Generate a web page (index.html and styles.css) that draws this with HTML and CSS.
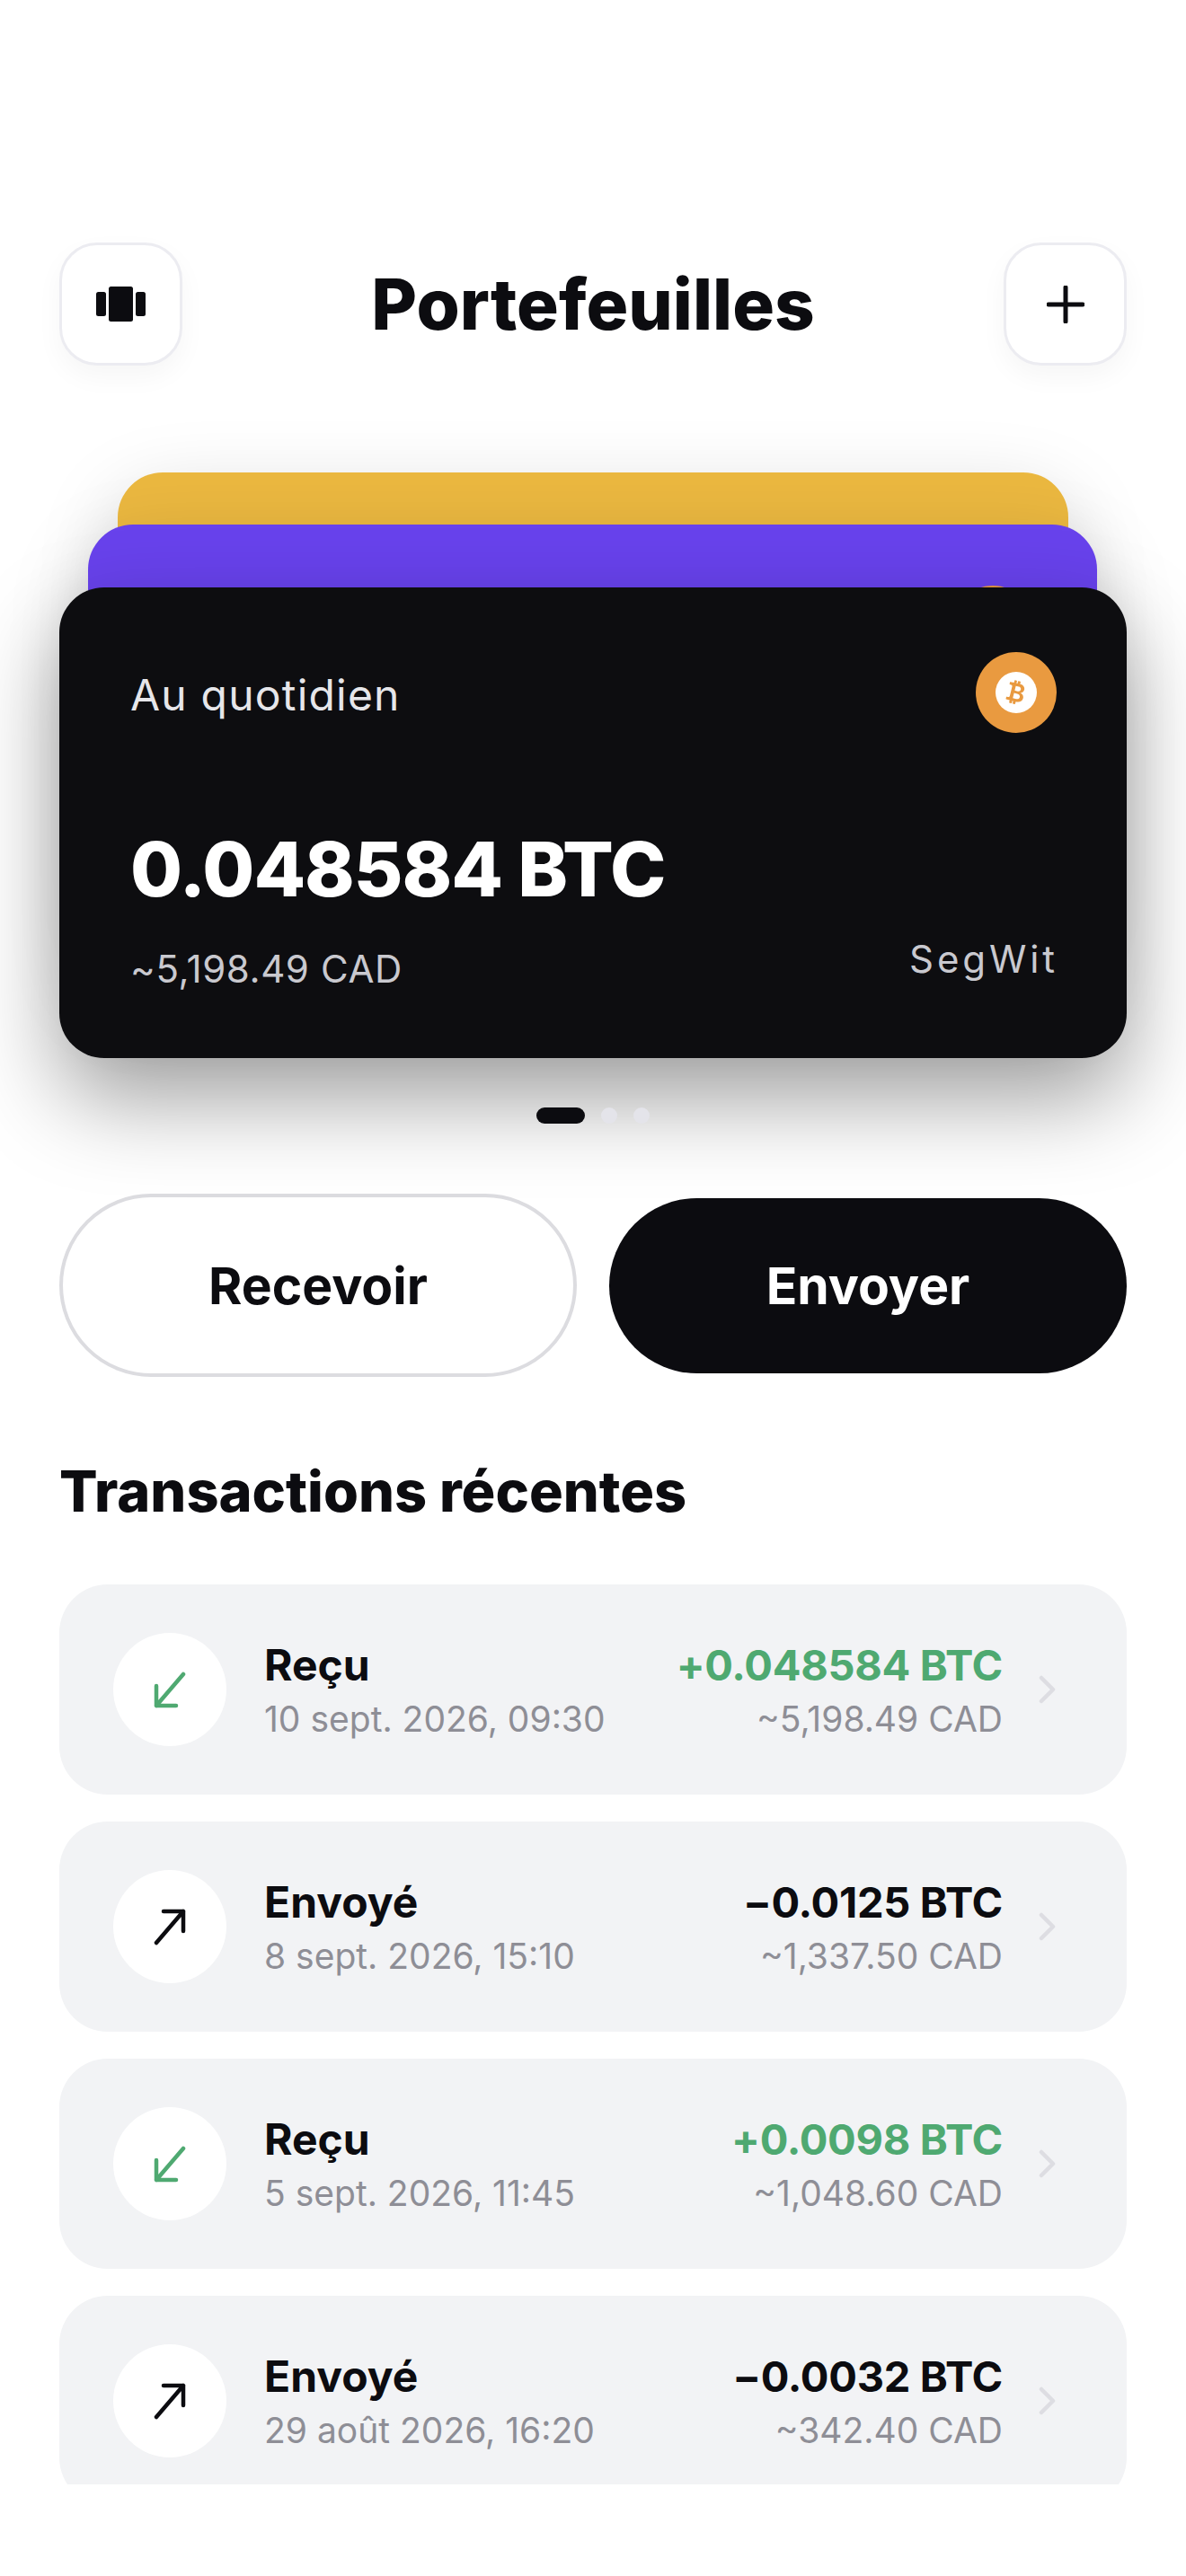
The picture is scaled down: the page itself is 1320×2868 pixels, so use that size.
FILE: index.html
```html
<!DOCTYPE html>
<html lang="fr">
<head>
  <meta charset="UTF-8" />
  <meta name="viewport" content="width=device-width, initial-scale=1.0" />
  <title>Portefeuilles</title>
  <link rel="stylesheet" href="styles.css">
</head>
<body>
  <div class="screen">
    <header class="topbar">
      <button class="icon-btn" aria-label="Changer de vue">
        <svg width="55" height="39" viewBox="0 0 55 39" fill="#0c0c10">
          <rect x="0" y="6" width="11" height="27" rx="2.5" />
          <rect x="14" y="0" width="27" height="39" rx="2.5" />
          <rect x="44" y="6" width="11" height="27" rx="2.5" />
        </svg>
      </button>
      <h1>Portefeuilles</h1>
      <button class="icon-btn" aria-label="Ajouter">
        <svg width="42" height="42" viewBox="0 0 42 42" fill="none" stroke="#0c0c10" stroke-width="5" stroke-linecap="round">
          <path d="M21 2v38M2 21h38" />
        </svg>
      </button>
    </header>

    <section class="stack">
      <div class="card card-yellow"></div>
      <div class="card card-purple"><span class="coin"></span></div>
      <div class="card card-main">
        <div class="card-top">
          <span class="card-name">Au quotidien</span>
          <span class="coin">
            <span class="coin-inner">
              <svg width="32" height="32" viewBox="0 0 16 16" fill="#e99a40">
                <path transform="rotate(14 8 8)" d="M5.5 13v1.25c0 .138.112.25.25.25h1a.25.25 0 0 0 .25-.25V13h.5v1.25c0 .138.112.25.25.25h1a.25.25 0 0 0 .25-.25V13h.084c1.992 0 3.416-1.033 3.416-2.82 0-1.502-1.007-2.323-2.186-2.44v-.088c.97-.242 1.683-.974 1.683-2.19C11.997 3.93 10.847 3 9.092 3H9V1.75a.25.25 0 0 0-.25-.25h-1a.25.25 0 0 0-.25.25V3h-.573V1.75a.25.25 0 0 0-.25-.25H5.75a.25.25 0 0 0-.25.25V3l-1.998.011a.25.25 0 0 0-.25.25v.989c0 .137.11.25.248.25l.755-.005a.75.75 0 0 1 .745.75v5.505a.75.75 0 0 1-.75.75l-.748.011a.25.25 0 0 0-.246.25v.989c0 .137.11.25.25.25zm1.427-8.513h1.719c.906 0 1.438.498 1.438 1.312 0 .871-.575 1.362-1.877 1.362h-1.28zm0 4.051h1.84c1.137 0 1.756.58 1.756 1.524 0 .953-.626 1.45-2.158 1.45H6.927z" />
              </svg>
            </span>
          </span>
        </div>
        <div class="card-balance">0.048584 BTC</div>
        <div class="card-bottom">
          <span class="card-fiat">~5,198.49 CAD</span>
          <span class="card-type">SegWit</span>
        </div>
      </div>
    </section>

    <div class="dots">
      <span class="dot active"></span>
      <span class="dot"></span>
      <span class="dot"></span>
    </div>

    <div class="actions">
      <button class="btn btn-outline">Recevoir</button>
      <button class="btn btn-dark">Envoyer</button>
    </div>

    <h2>Transactions récentes</h2>

    <div class="tx-list">
      <div class="tx">
        <span class="tx-icon">
          <svg width="42" height="42" viewBox="0 0 42 42" fill="none" stroke="#4fa971" stroke-width="4.5" stroke-linecap="round" stroke-linejoin="round">
            <path d="M36 4 6 39M6 17v22h22" />
          </svg>
        </span>
        <div class="tx-info">
          <div class="tx-title">Reçu</div>
          <div class="tx-date">10 sept. 2026, 09:30</div>
        </div>
        <div class="tx-amounts">
          <div class="tx-amount green">+0.048584 BTC</div>
          <div class="tx-fiat">~5,198.49 CAD</div>
        </div>
        <svg class="chevron" width="20" height="32" viewBox="0 0 20 32" fill="none" stroke="#dddde2" stroke-width="4.5" stroke-linecap="round" stroke-linejoin="round">
          <path d="M3 3l13 13L3 29" />
        </svg>
      </div>

      <div class="tx">
        <span class="tx-icon">
          <svg width="42" height="42" viewBox="0 0 42 42" fill="none" stroke="#0c0c10" stroke-width="4.5" stroke-linecap="round" stroke-linejoin="round">
            <path d="M6 39 36 4M14 4h22v22" />
          </svg>
        </span>
        <div class="tx-info">
          <div class="tx-title">Envoyé</div>
          <div class="tx-date">8 sept. 2026, 15:10</div>
        </div>
        <div class="tx-amounts">
          <div class="tx-amount">−0.0125 BTC</div>
          <div class="tx-fiat">~1,337.50 CAD</div>
        </div>
        <svg class="chevron" width="20" height="32" viewBox="0 0 20 32" fill="none" stroke="#dddde2" stroke-width="4.5" stroke-linecap="round" stroke-linejoin="round">
          <path d="M3 3l13 13L3 29" />
        </svg>
      </div>

      <div class="tx">
        <span class="tx-icon">
          <svg width="42" height="42" viewBox="0 0 42 42" fill="none" stroke="#4fa971" stroke-width="4.5" stroke-linecap="round" stroke-linejoin="round">
            <path d="M36 4 6 39M6 17v22h22" />
          </svg>
        </span>
        <div class="tx-info">
          <div class="tx-title">Reçu</div>
          <div class="tx-date">5 sept. 2026, 11:45</div>
        </div>
        <div class="tx-amounts">
          <div class="tx-amount green">+0.0098 BTC</div>
          <div class="tx-fiat">~1,048.60 CAD</div>
        </div>
        <svg class="chevron" width="20" height="32" viewBox="0 0 20 32" fill="none" stroke="#dddde2" stroke-width="4.5" stroke-linecap="round" stroke-linejoin="round">
          <path d="M3 3l13 13L3 29" />
        </svg>
      </div>

      <div class="tx">
        <span class="tx-icon">
          <svg width="42" height="42" viewBox="0 0 42 42" fill="none" stroke="#0c0c10" stroke-width="4.5" stroke-linecap="round" stroke-linejoin="round">
            <path d="M6 39 36 4M14 4h22v22" />
          </svg>
        </span>
        <div class="tx-info">
          <div class="tx-title">Envoyé</div>
          <div class="tx-date">29 août 2026, 16:20</div>
        </div>
        <div class="tx-amounts">
          <div class="tx-amount">−0.0032 BTC</div>
          <div class="tx-fiat">~342.40 CAD</div>
        </div>
        <svg class="chevron" width="20" height="32" viewBox="0 0 20 32" fill="none" stroke="#dddde2" stroke-width="4.5" stroke-linecap="round" stroke-linejoin="round">
          <path d="M3 3l13 13L3 29" />
        </svg>
      </div>
    </div>
  </div>
</body>
</html>
```

FILE: styles.css
```css
* {
  box-sizing: border-box;
}
body {
  margin: 0;
  background: #fff;
  font-family: "Inter", "Liberation Sans", sans-serif;
  color: #0c0c10;
}
button {
  font-family: inherit;
  cursor: pointer;
}
.screen {
  width: 1320px;
  height: 2868px;
  padding: 270px 66px 0;
  overflow: hidden;
}
.topbar {
  display: flex;
  align-items: center;
  justify-content: space-between;
  height: 137px;
}
.topbar h1 {
  margin: 0;
  font-size: 78px;
  font-weight: 800;
}
.icon-btn {
  display: flex;
  align-items: center;
  justify-content: center;
  width: 137px;
  height: 137px;
  padding: 0;
  background: #fff;
  border: 3px solid #ececf1;
  border-radius: 42px;
  box-shadow: 0 12px 30px rgba(0,0,0,0.04);
}

.stack {
  position: relative;
  margin-top: 119px;
  padding-top: 128px;
}
.card {
  border-radius: 50px;
}
.card-yellow,
.card-purple {
  position: absolute;
  height: 500px;
  box-shadow: 0 30px 90px rgba(0,0,0,0.18);
}
.card-yellow {
  top: 0;
  left: 65px;
  right: 65px;
  background: #ebb840;
}
.card-purple {
  top: 58px;
  left: 32px;
  right: 33px;
  background: #6842ec;
}
.card-purple .coin {
  position: absolute;
  top: 68px;
  right: 71px;
}
.card-main {
  position: relative;
  height: 524px;
  padding: 72px 78px 0 79px;
  background: #0d0d10;
  color: #fff;
  box-shadow: 0 45px 100px rgba(0,0,0,0.38);
}
.card-top {
  display: flex;
  align-items: flex-start;
  justify-content: space-between;
}
.card-name {
  margin-top: 18px;
  font-size: 48px;
  letter-spacing: 1.2px;
  color: #e6e6ea;
}
.coin {
  display: flex;
  align-items: center;
  justify-content: center;
  width: 90px;
  height: 90px;
  border-radius: 50%;
  background: #e99a40;
}
.coin-inner {
  display: flex;
  align-items: center;
  justify-content: center;
  width: 46px;
  height: 46px;
  border-radius: 50%;
  background: #fff;
}
.card-balance {
  margin-top: 101px;
  font-size: 84px;
  line-height: 102px;
  font-weight: 800;
  letter-spacing: -1.1px;
}
.card-bottom {
  display: flex;
  align-items: center;
  justify-content: space-between;
  margin-top: 34px;
}
.card-fiat {
  font-size: 42px;
  letter-spacing: 0.6px;
  color: #c9c9cf;
}
.card-type {
  margin: -22px -2px 0 0;
  font-size: 42px;
  letter-spacing: 3.9px;
  color: #c9c9cf;
}

.dots {
  position: relative;
  display: flex;
  justify-content: center;
  gap: 18px;
  margin-top: 55px;
}
.dot {
  width: 18px;
  height: 18px;
  border-radius: 9px;
  background: #e4e4ea;
}
.dot.active {
  width: 54px;
  background: #0c0c10;
}

.actions {
  display: flex;
  align-items: center;
  justify-content: space-between;
  margin-top: 78px;
}
.btn {
  width: 576px;
  padding: 0;
  border-radius: 102px;
  font-size: 57px;
  font-weight: 700;
}
.btn-outline {
  height: 204px;
  background: #fff;
  border: 4px solid #dcdce0;
  color: #0c0c10;
}
.btn-dark {
  height: 195px;
  background: #0c0c10;
  border: none;
  color: #fff;
}

h2 {
  margin: 87px 0 0;
  font-size: 63px;
  line-height: 80px;
  font-weight: 800;
}

.tx-list {
  display: flex;
  flex-direction: column;
  gap: 30px;
  height: 1002px;
  margin-top: 64px;
  overflow: hidden;
}
.tx {
  display: flex;
  align-items: center;
  flex: none;
  height: 234px;
  padding: 0 78px 0 60px;
  background: #f2f3f5;
  border-radius: 54px;
}
.tx-icon {
  display: flex;
  align-items: center;
  justify-content: center;
  flex: none;
  width: 126px;
  height: 126px;
  margin-right: 42px;
  border-radius: 50%;
  background: #fff;
}
.tx-info {
  flex: 1;
}
.tx-info,
.tx-amounts {
  padding-top: 4px;
}
.tx-title {
  font-size: 48px;
  line-height: 58px;
  font-weight: 700;
}
.tx-date,
.tx-fiat {
  margin-top: 4px;
  font-size: 39px;
  line-height: 54px;
  color: #8e8e96;
}
.tx-amounts {
  text-align: right;
}
.tx-amount {
  font-size: 47px;
  line-height: 58px;
  font-weight: 700;
  letter-spacing: -0.3px;
}
.tx-amount.green {
  color: #4fa971;
}
.chevron {
  flex: none;
  margin-left: 40px;
}
```
